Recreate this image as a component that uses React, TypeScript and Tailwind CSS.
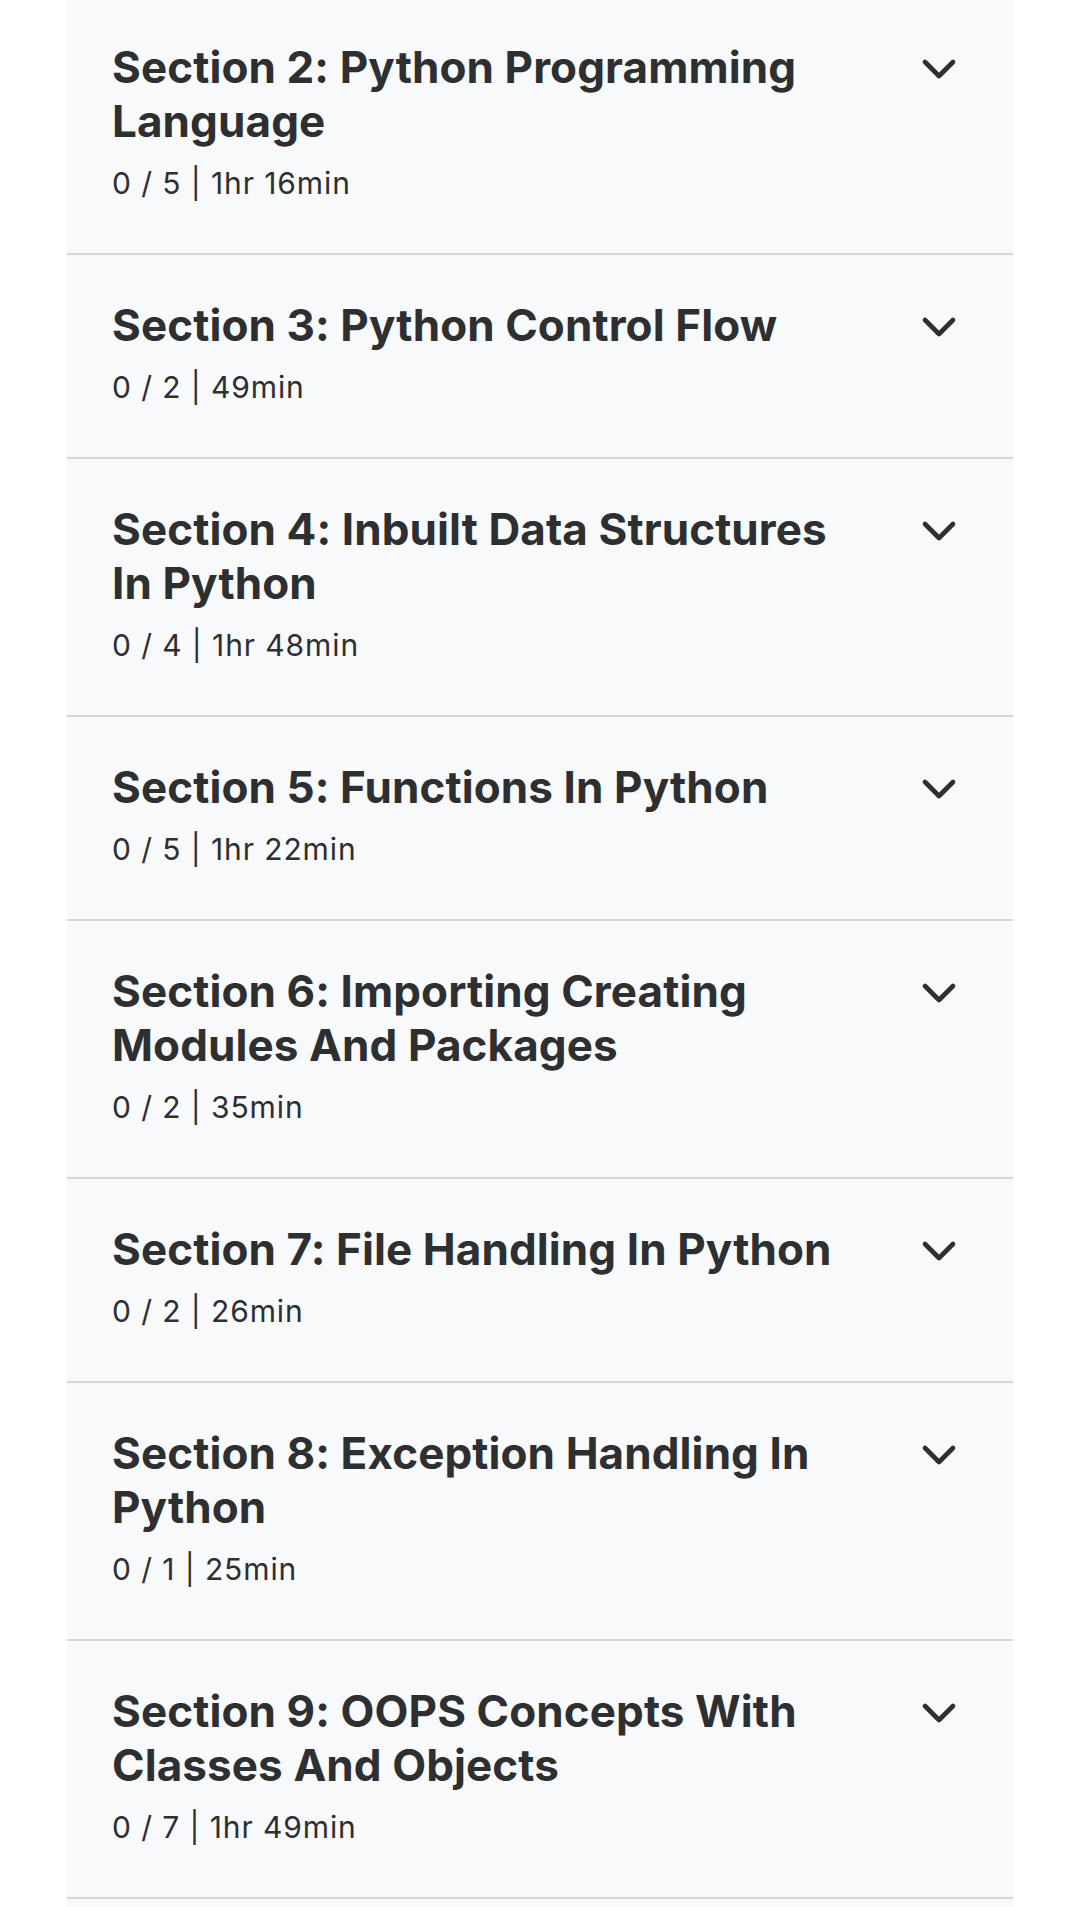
import { ChevronDown } from 'lucide-react';

interface CurriculumSection {
  title: string;
  progress: string;
  duration: string;
}

const sections: CurriculumSection[] = [
  { title: 'Section 2: Python Programming Language', progress: '0 / 5', duration: '1hr 16min' },
  { title: 'Section 3: Python Control Flow', progress: '0 / 2', duration: '49min' },
  { title: 'Section 4: Inbuilt Data Structures In Python', progress: '0 / 4', duration: '1hr 48min' },
  { title: 'Section 5: Functions In Python', progress: '0 / 5', duration: '1hr 22min' },
  { title: 'Section 6: Importing Creating Modules And Packages', progress: '0 / 2', duration: '35min' },
  { title: 'Section 7: File Handling In Python', progress: '0 / 2', duration: '26min' },
  { title: 'Section 8: Exception Handling In Python', progress: '0 / 1', duration: '25min' },
  { title: 'Section 9: OOPS Concepts With Classes And Objects', progress: '0 / 7', duration: '1hr 49min' },
];

function SectionRow({ section }: { section: CurriculumSection }) {
  return (
    <button
      type="button"
      className="flex w-full items-start border-b-2 border-[#d1d7dc] bg-[#f7f9fa] pt-[43px] pb-[50px] pl-[45px] pr-[46px] text-left"
    >
      <div className="flex-1 min-w-0">
        <h3 className="text-[44px] leading-[54px] font-bold tracking-[0.1px] text-[#2d2f31]">
          {section.title}
        </h3>
        <div className="mt-[15px] text-[30px] leading-[40px] tracking-[0.9px] text-[#2d2f31]">
          {section.progress} | {section.duration}
        </div>
      </div>
      <div className="ml-[47px] mt-px shrink-0">
        <ChevronDown className="h-[56px] w-[56px] text-[#2d2f31]" strokeWidth={2} />
      </div>
    </button>
  );
}

export default function App() {
  return (
    <div className="h-screen bg-white overflow-hidden" style={{ fontFamily: 'Inter, "Noto Sans", sans-serif' }}>
      {/* panel keeps its background below the last row: next section starts off-screen */}
      <div className="mx-[67px] -mt-[3px] w-[946px] h-[calc(100%+3px)] bg-[#f7f9fa]">
        {sections.map(section => (
          <SectionRow key={section.title} section={section} />
        ))}
      </div>
    </div>
  );
}
